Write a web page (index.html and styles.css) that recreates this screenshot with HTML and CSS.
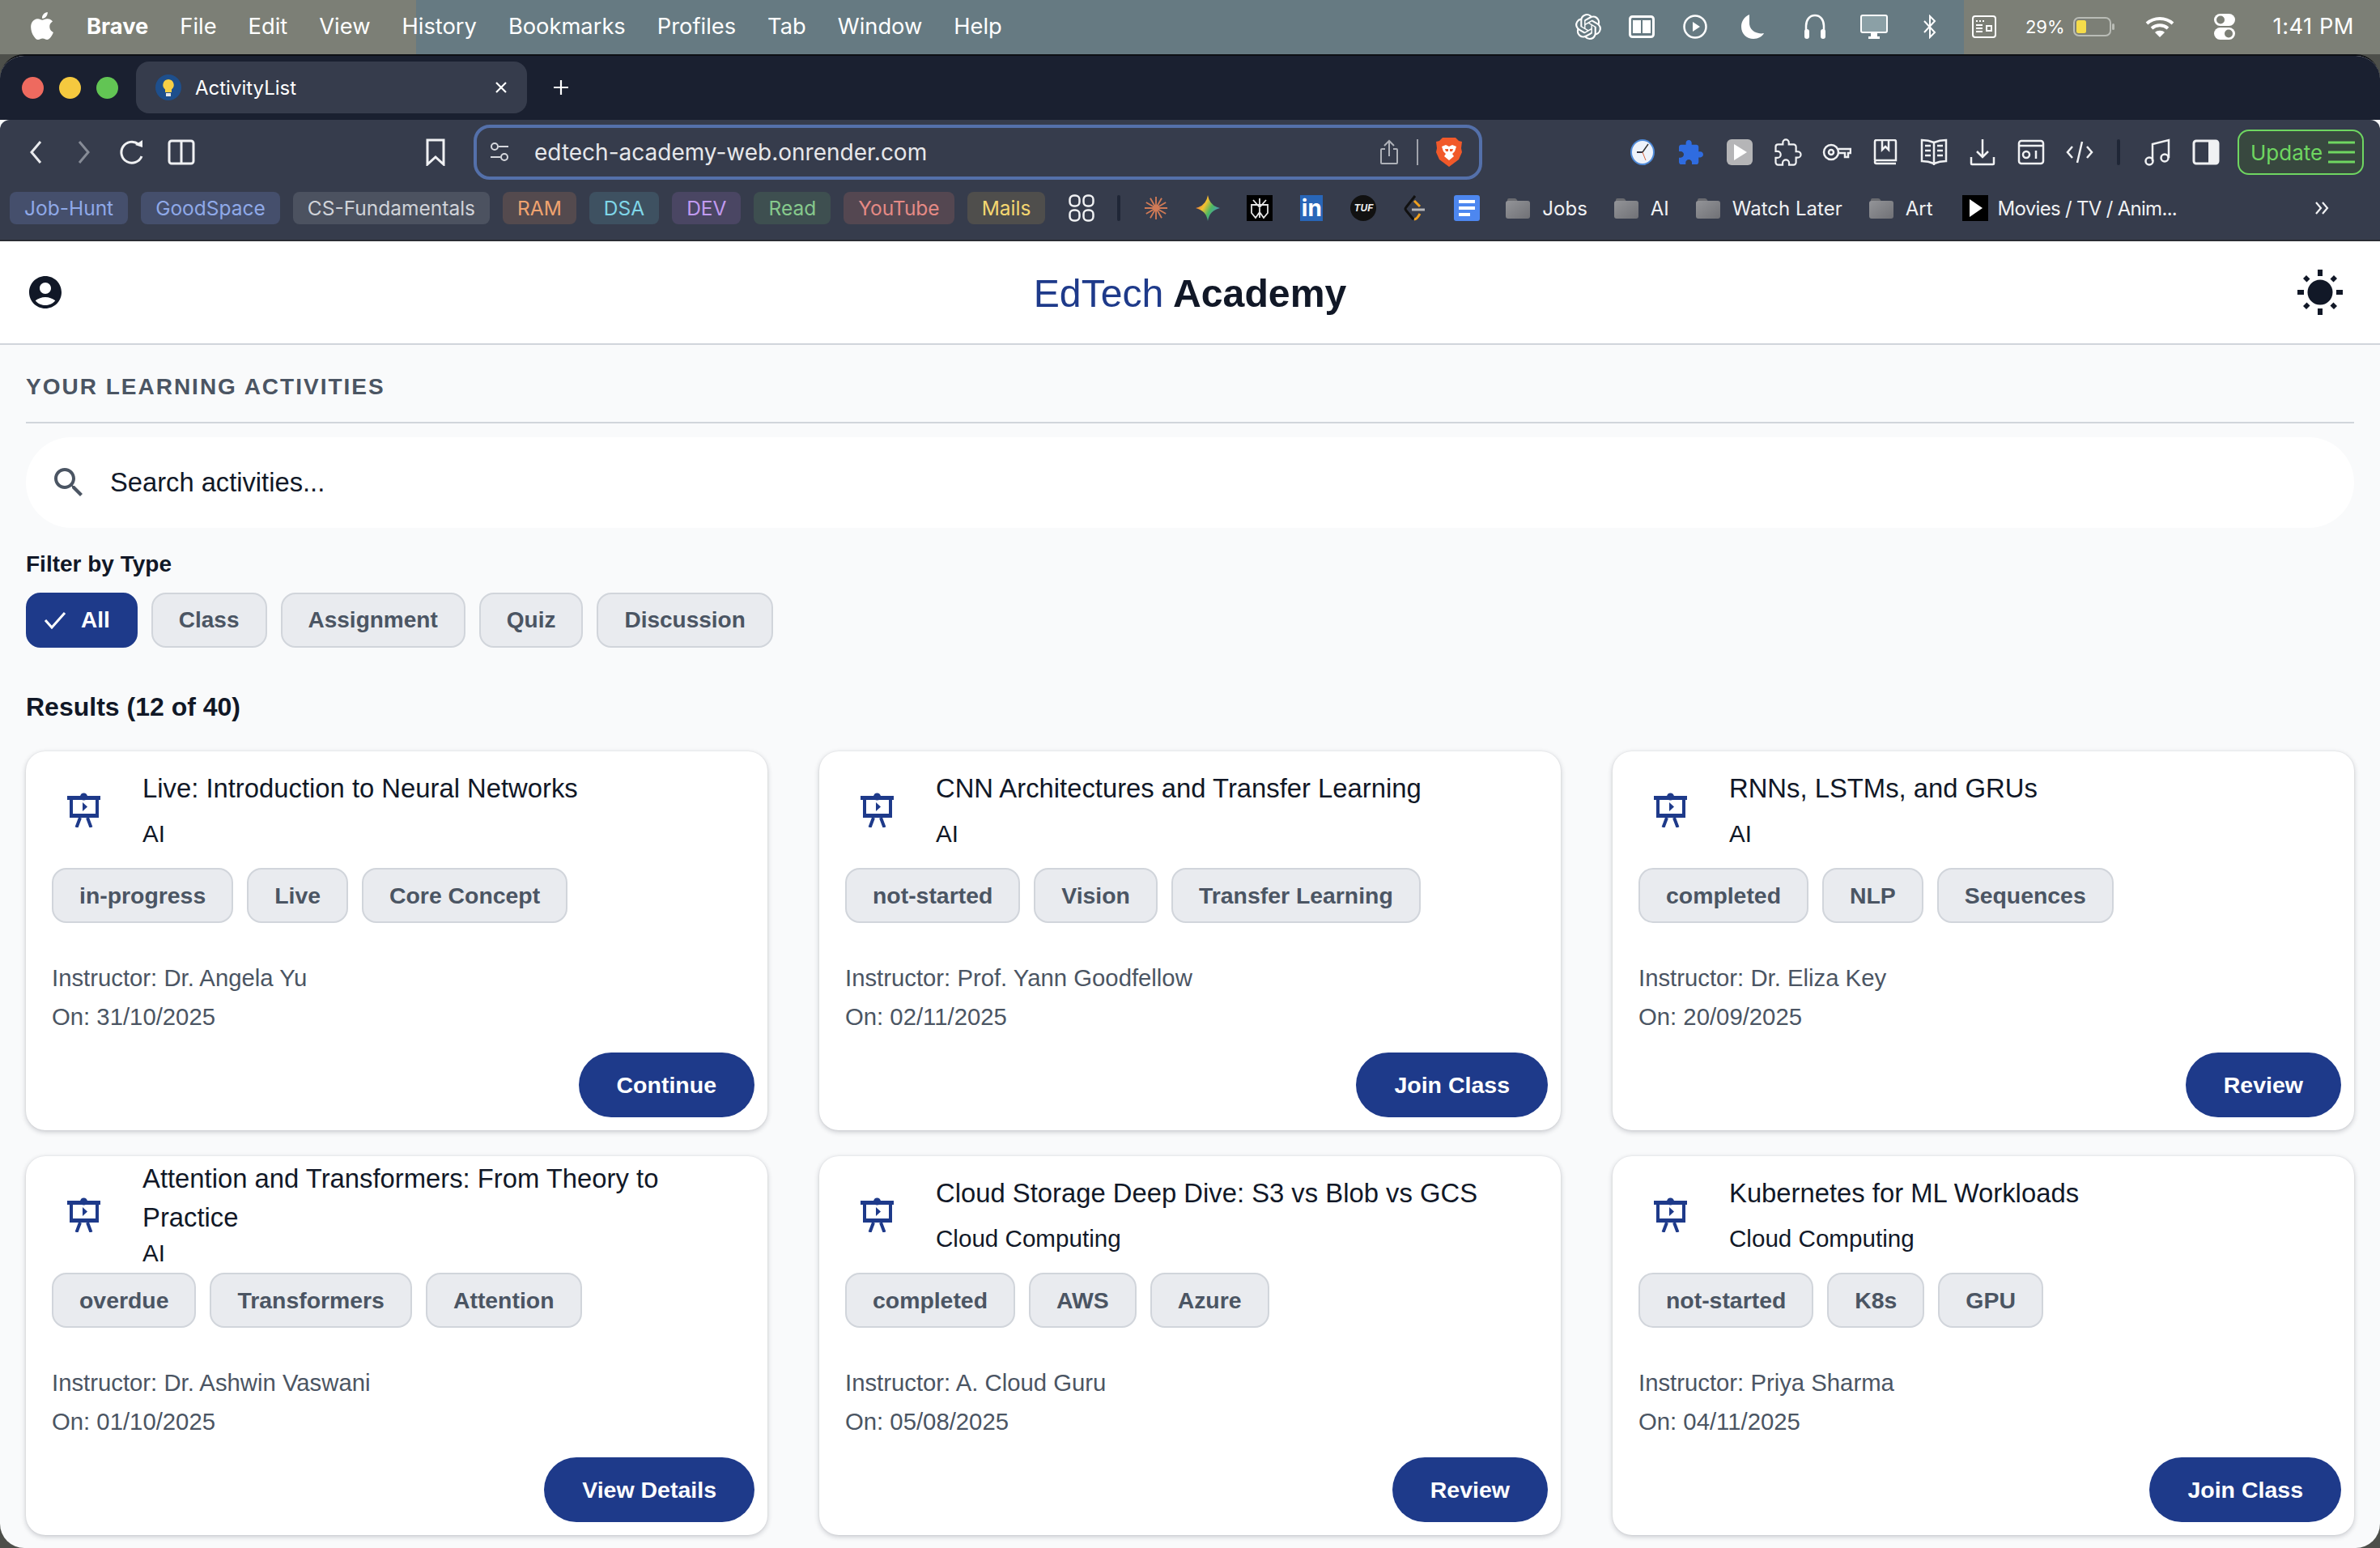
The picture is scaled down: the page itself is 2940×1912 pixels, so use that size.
FILE: index.html
```html
<!DOCTYPE html>
<html lang="en">
<head>
<meta charset="utf-8">
<title>ActivityList</title>
<link rel="stylesheet" href="styles.css">
</head>
<body>

<svg class="defs" width="0" height="0" aria-hidden="true">
	<symbol id="ico-present" viewBox="0 0 41 43">
		<circle cx="20.5" cy="5" r="4.5" fill="currentColor"/>
		<rect x="0" y="4" width="41" height="5" fill="currentColor"/>
		<path fill="currentColor" fill-rule="evenodd" d="M3 9h36v22H3zM7 9v17h28V9z"/>
		<path stroke="currentColor" stroke-width="4" fill="none" d="M16 31l-4.500 12M25 31l4.500 12"/>
		<path fill="currentColor" d="M19 12v11l6-5.500z"/>
	</symbol>
	<symbol id="ico-folder" viewBox="0 0 30 26">
		<path fill="#6a6b70" d="M2 3q0-2 2-2h7q2 0 3 2l1 2H2z"/>
		<rect x="0" y="4" width="30" height="22" rx="3" fill="url(#folder-fill)"/>
	</symbol>
	<linearGradient id="folder-fill" x1="0" y1="0" x2="1" y2="1">
		<stop offset="0" stop-color="#939498"/>
		<stop offset="1" stop-color="#707176"/>
	</linearGradient>
</svg>

<header class="menubar">
	<svg class="apple" viewBox="0 0 24 24"><path fill="#fff" d="M12.152 6.896c-.948 0-2.415-1.078-3.96-1.04-2.04.027-3.91 1.183-4.961 3.014-2.117 3.675-.546 9.103 1.519 12.09 1.013 1.454 2.208 3.09 3.792 3.039 1.52-.065 2.09-.987 3.935-.987 1.831 0 2.35.987 3.96.948 1.637-.026 2.676-1.48 3.676-2.948 1.156-1.688 1.636-3.325 1.662-3.415-.039-.013-3.182-1.221-3.22-4.857-.026-3.04 2.48-4.494 2.597-4.559-1.429-2.09-3.623-2.324-4.39-2.376-2-.156-3.675 1.09-4.61 1.09zM15.53 3.83c.843-1.012 1.4-2.427 1.245-3.83-1.207.052-2.662.805-3.532 1.818-.78.896-1.454 2.338-1.273 3.714 1.338.104 2.715-.688 3.559-1.701"/></svg>
	<nav class="menus">
		<span class="app-name">Brave</span>
		<span>File</span>
		<span>Edit</span>
		<span>View</span>
		<span>History</span>
		<span>Bookmarks</span>
		<span>Profiles</span>
		<span>Tab</span>
		<span>Window</span>
		<span>Help</span>
	</nav>
	<div class="status-icons">
		<svg width="32" height="34" viewBox="0 0 24 24"><path fill="#fff" d="M22.2819 9.8211a5.9847 5.9847 0 0 0-.5157-4.9108 6.0462 6.0462 0 0 0-6.5098-2.9A6.0651 6.0651 0 0 0 4.9807 4.1818a5.9847 5.9847 0 0 0-3.9977 2.9 6.0462 6.0462 0 0 0 .7427 7.0966 5.98 5.98 0 0 0 .511 4.9107 6.051 6.051 0 0 0 6.5146 2.9001A5.9847 5.9847 0 0 0 13.2599 24a6.0557 6.0557 0 0 0 5.7718-4.2058 5.9894 5.9894 0 0 0 3.9977-2.9001 6.0557 6.0557 0 0 0-.7475-7.0729zm-9.022 12.6081a4.4755 4.4755 0 0 1-2.8764-1.0408l.1419-.0804 4.7783-2.7582a.7948.7948 0 0 0 .3927-.6813v-6.7369l2.02 1.1686a.071.071 0 0 1 .038.052v5.5826a4.504 4.504 0 0 1-4.4945 4.4944zm-9.6607-4.1254a4.4708 4.4708 0 0 1-.5346-3.0137l.142.0852 4.783 2.7582a.7712.7712 0 0 0 .7806 0l5.8428-3.3685v2.3324a.0804.0804 0 0 1-.0332.0615L9.74 19.9502a4.4992 4.4992 0 0 1-6.1408-1.6464zM2.3408 7.8956a4.485 4.485 0 0 1 2.3655-1.9728V11.6a.7664.7664 0 0 0 .3879.6765l5.8144 3.3543-2.0201 1.1685a.0757.0757 0 0 1-.071 0l-4.8303-2.7865A4.504 4.504 0 0 1 2.3408 7.872zm16.5963 3.8558L13.1038 8.364 15.1192 7.2a.0757.0757 0 0 1 .071 0l4.8303 2.7913a4.4944 4.4944 0 0 1-.6765 8.1042v-5.6772a.79.79 0 0 0-.407-.667zm2.0107-3.0231l-.142-.0852-4.7735-2.7818a.7759.7759 0 0 0-.7854 0L9.409 9.2297V6.8974a.0662.0662 0 0 1 .0284-.0615l4.8303-2.7866a4.4992 4.4992 0 0 1 6.6802 4.66zM8.3065 12.863l-2.02-1.1638a.0804.0804 0 0 1-.038-.0567V6.0742a4.4992 4.4992 0 0 1 7.3757-3.4537l-.142.0805L8.704 5.459a.7948.7948 0 0 0-.3927.6813zm1.0976-2.3654l2.602-1.4998 2.6069 1.4998v2.9994l-2.5974 1.5-2.6067-1.5Z"/></svg>
		<svg width="32" height="28" viewBox="0 0 32 28"><rect x="1.500" y="1.500" width="29" height="25" rx="3" fill="none" stroke="#fff" stroke-width="3"/><rect x="5" y="6" width="10" height="16" fill="#fff"/><rect x="17" y="6" width="10" height="16" fill="#fff"/></svg>
		<svg width="30" height="30" viewBox="0 0 30 30"><circle cx="15" cy="15" r="13.500" fill="none" stroke="#fff" stroke-width="2.500"/><path fill="#fff" d="M12 9v12l9-6z"/></svg>
		<svg width="30" height="32" viewBox="0 0 30 32"><path fill="#fff" d="M11 1C4 4 1 10 1 16c0 9 7 15 15 15 6 0 11-3 13-7-9 2-19-4-18-14 0-4 0-7 0-9z"/></svg>
		<svg width="30" height="32" viewBox="0 0 30 32" fill="none"><path stroke="#fff" stroke-width="2.500" d="M4 22V15C4 8 8 2 15 2s11 6 11 13v7"/><rect x="2" y="19" width="6" height="12" rx="3" fill="#fff"/><rect x="22" y="19" width="6" height="12" rx="3" fill="#fff"/></svg>
		<svg width="34" height="30" viewBox="0 0 34 30"><rect x="1" y="1" width="32" height="21" rx="2" fill="#8ba0a6" stroke="#fff" stroke-width="2"/><rect x="13" y="23" width="8" height="4" fill="#fff"/><rect x="10" y="27" width="14" height="3" fill="#fff"/></svg>
		<svg width="18" height="30" viewBox="0 0 18 30" fill="none"><path stroke="#fff" stroke-width="2" d="M2 8l13 14-6 6V2l6 6L2 22"/></svg>
		<svg width="30" height="28" viewBox="0 0 30 28"><rect x="1" y="1" width="28" height="26" rx="3" fill="none" stroke="#fff" stroke-width="2"/><path stroke="#fff" stroke-width="2" d="M5 7h2M9 7h2M13 7h2M5 12h8M5 16h8M5 20h8M18 13h6v6h-6z" fill="none"/></svg>
		<span class="battery-pct">29%</span>
		<svg class="battery" width="52" height="24" viewBox="0 0 52 24"><rect x="1" y="1" width="45" height="22" rx="6" fill="none" stroke="#b9bcb6" stroke-width="2"/><rect x="4" y="4" width="12" height="16" rx="2.500" fill="#f5dc4a"/><rect x="48" y="8" width="3" height="8" rx="1.500" fill="#b9bcb6"/></svg>
		<svg class="wifi" width="36" height="28" viewBox="0 0 36 28" fill="none" stroke="#fff" stroke-width="4"><path d="M2 10c9-8 23-8 32 0M8 16c6-5 14-5 20 0"/><path fill="#fff" stroke="none" d="M18 27l-6-6c3-3 9-3 12 0z"/></svg>
		<svg class="toggles" width="26" height="32" viewBox="0 0 26 32"><rect x="0" y="0" width="26" height="15" rx="7.500" fill="#fff"/><circle cx="8" cy="7.500" r="5" fill="#7c7f76"/><rect x="0" y="17" width="26" height="15" rx="7.500" fill="#fff"/><circle cx="18" cy="24.500" r="5" fill="#7c7f76"/></svg>
		<span class="clock-text">1:41 PM</span>
	</div>
</header>

<div class="window">
	<div class="tabbar">
		<span class="light light-red"></span>
		<span class="light light-yellow"></span>
		<span class="light light-green"></span>
		<div class="tab">
			<svg class="favicon" viewBox="0 0 32 32"><circle cx="16" cy="16" r="16" fill="#1e4f8c"/><path fill="#f7cf45" d="M16 6a7 7 0 0 0-4 12.500V22h8v-3.500A7 7 0 0 0 16 6z"/><rect x="13" y="23" width="6" height="4" fill="#e8e8e8"/></svg>
			<span class="tab-title">ActivityList</span>
			<svg class="tab-close" viewBox="0 0 16 16"><path stroke="#fff" stroke-width="2.200" d="M2 2l12 12M14 2L2 14"/></svg>
		</div>
		<svg class="tab-new" viewBox="0 0 20 20"><path stroke="#fff" stroke-width="2.200" d="M10 1v18M1 10h18"/></svg>
	</div>

	<div class="chrome">
		<div class="toolbar">
			<span class="slot"><svg width="16" height="30" viewBox="0 0 16 30" fill="none" stroke="#e8e9ec" stroke-width="3"><path d="M14 2L3 15l11 13"/></svg></span>
			<span class="slot"><svg width="16" height="30" viewBox="0 0 16 30" fill="none" stroke="#868b96" stroke-width="3"><path d="M2 2l11 13L2 28"/></svg></span>
			<span class="slot"><svg width="34" height="34" viewBox="0 0 34 34" fill="none" stroke="#f0f1f3" stroke-width="3"><path d="M28 22a13 13 0 1 1-4-15"/><path fill="#f0f1f3" stroke="none" d="M20 8l9-6v9z"/></svg></span>
			<span class="slot"><svg width="34" height="32" viewBox="0 0 34 32" fill="none" stroke="#f0f1f3" stroke-width="3"><rect x="2" y="2" width="30" height="28" rx="3"/><path d="M17 2v28"/></svg></span>
			<span class="slot slot-bookmark"><svg width="26" height="34" viewBox="0 0 26 34" fill="none" stroke="#f0f1f3" stroke-width="3"><path d="M3 2h20v30l-10-9-10 9z"/></svg></span>
			<div class="urlbar">
				<svg class="url-tune" width="24" height="30" viewBox="0 0 24 30" fill="none" stroke="#d6d8dd" stroke-width="2"><circle cx="6" cy="8" r="4"/><path d="M11 8h12M1 21h12"/><circle cx="18" cy="21" r="4"/></svg>
				<span class="url-text">edtech-academy-web.onrender.com</span>
				<svg class="url-share" width="24" height="32" viewBox="0 0 24 32" fill="none" stroke="#aeb1b8" stroke-width="2"><path d="M7 12H3q-1 0-1 1v16q0 1 1 1h18q1 0 1-1V13q0-1-1-1h-4M12 21V2M6 8l6-6 6 6"/></svg>
				<span class="url-sep"></span>
				<svg class="url-brave" width="32" height="36" viewBox="0 0 32 36"><path fill="#f1592a" d="M8 0h16l4 4 4 1-1 8 1 5-4 9-12 9-12-9-4-9 1-5-1-8 4-1z"/><path fill="#fff" d="M7 11l5-2 4 2 4-2 5 2-2 6-3 3 2 3-6 5-6-5 2-3-3-3z"/><path fill="#f1592a" d="M11 14h4v3h-3zM17 14h4l-1 3h-3z"/></svg>
			</div>
			<span class="slot slot-first-ext"><svg width="30" height="32" viewBox="0 0 30 32"><ellipse cx="15" cy="16" rx="14" ry="15" fill="#eef3fb" stroke="#4f8ad8" stroke-width="2"/><path stroke="#333" stroke-width="1.500" d="M15 16l7-10"/><path stroke="#334" stroke-width="2" d="M15 16H8"/><path stroke="#d8643c" stroke-width="1" d="M15 16l4 10"/></svg></span>
			<span class="slot"><svg width="30" height="32" viewBox="2 1 21 21"><path fill="#2f6ce0" d="M20.500 11H19V7c0-1.100-.9-2-2-2h-4V3.500C13 2.120 11.880 1 10.500 1S8 2.120 8 3.500V5H4c-1.100 0-1.990.9-1.990 2v3.800H3.500c1.490 0 2.700 1.210 2.700 2.700s-1.210 2.700-2.700 2.700H2V20c0 1.100.9 2 2 2h3.800v-1.500c0-1.490 1.210-2.700 2.700-2.700 1.490 0 2.700 1.210 2.700 2.700V22H17c1.100 0 2-.9 2-2v-4h1.500c1.380 0 2.500-1.120 2.500-2.500S21.880 11 20.500 11z"/></svg></span>
			<span class="slot"><svg width="32" height="32" viewBox="0 0 32 32"><rect width="32" height="32" rx="6" fill="#b5b5b7"/><path fill="#fff" d="M9 6v20l16-10z"/></svg></span>
			<span class="slot"><svg width="34" height="34" viewBox="1 0 23 23"><path fill="none" stroke="#f0f1f3" stroke-width="1.500" d="M20.500 11H19V7c0-1.100-.9-2-2-2h-4V3.500C13 2.120 11.880 1 10.500 1S8 2.120 8 3.500V5H4c-1.100 0-1.990.9-1.990 2v3.800H3.500c1.490 0 2.700 1.210 2.700 2.700s-1.210 2.700-2.700 2.700H2V20c0 1.100.9 2 2 2h3.800v-1.500c0-1.490 1.210-2.700 2.700-2.700 1.490 0 2.700 1.210 2.700 2.700V22H17c1.100 0 2-.9 2-2v-4h1.500c1.380 0 2.500-1.120 2.500-2.500S21.880 11 20.500 11z"/></svg></span>
			<span class="slot"><svg width="36" height="22" viewBox="0 0 36 22" fill="none" stroke="#f0f1f3" stroke-width="2.500"><circle cx="11" cy="11" r="9"/><circle cx="11" cy="11" r="3"/><path d="M20 7h15v5h-3v5h-4v-5h-8"/></svg></span>
			<span class="slot"><svg width="30" height="32" viewBox="0 0 30 32" fill="none" stroke="#f0f1f3" stroke-width="2.500"><path d="M2 26V3q0-2 2-2h22q2 0 2 2v23H4q-2 0-2 2t2 2h24"/><path d="M11 2v11l4-4 4 4V2" /></svg></span>
			<span class="slot"><svg width="34" height="34" viewBox="0 0 34 34" fill="none" stroke="#f0f1f3" stroke-width="2.500"><path d="M17 5Q10 2 2 2v26q8 0 15 3 7-3 15-3V2q-8 0-15 3zM17 5v28"/><path d="M6 9h7M6 15h7M6 21h7M21 9h7M21 15h7M21 21h7"/></svg></span>
			<span class="slot"><svg width="32" height="34" viewBox="0 0 32 34" fill="none" stroke="#f0f1f3" stroke-width="2.500"><path d="M16 1v22M9 16l7 7 7-7M2 23v8q0 1 1 1h26q1 0 1-1v-8"/></svg></span>
			<span class="slot"><svg width="34" height="32" viewBox="0 0 34 32" fill="none" stroke="#f0f1f3" stroke-width="2.500"><rect x="2" y="2" width="30" height="28" rx="3"/><path d="M2 8h30"/><circle cx="11" cy="19" r="4"/><path d="M23 14v10"/></svg></span>
			<span class="slot"><svg width="34" height="30" viewBox="0 0 34 30" fill="none" stroke="#f0f1f3" stroke-width="2.500"><path d="M8 8l-6 7 6 7M26 8l6 7-6 7M20 2l-6 26"/></svg></span>
			<span class="toolbar-sep"></span>
			<span class="slot"><svg width="34" height="34" viewBox="0 0 34 34" fill="none" stroke="#f0f1f3" stroke-width="2.500"><circle cx="7" cy="28" r="4.500"/><circle cx="26" cy="24" r="4.500"/><path d="M11 28V7L31 2v22"/></svg></span>
			<span class="slot"><svg width="34" height="32" viewBox="0 0 34 32"><rect x="2" y="2" width="30" height="28" rx="3" fill="none" stroke="#f0f1f3" stroke-width="3"/><rect x="20" y="2" width="12" height="28" fill="#f0f1f3"/></svg></span>
			<div class="update">
				<span>Update</span>
				<svg width="33" height="28" viewBox="0 0 33 28"><path stroke="#6fd661" stroke-width="3" d="M0 2h33M0 14h33M0 26h33"/></svg>
			</div>
		</div>

		<div class="bookmarks">
			<span class="mark mark-blue">Job-Hunt</span>
			<span class="mark mark-blue">GoodSpace</span>
			<span class="mark mark-grey">CS-Fundamentals</span>
			<span class="mark mark-orange">RAM</span>
			<span class="mark mark-cyan">DSA</span>
			<span class="mark mark-purple">DEV</span>
			<span class="mark mark-green">Read</span>
			<span class="mark mark-red">YouTube</span>
			<span class="mark mark-yellow">Mails</span>
			<span class="bm-icon bm-grid"><svg width="32" height="34" viewBox="0 0 32 34" fill="none" stroke="#f0f1f3" stroke-width="2.500"><rect x="1.500" y="1.500" width="12" height="13" rx="5"/><rect x="18.500" y="1.500" width="12" height="13" rx="5"/><rect x="1.500" y="19.500" width="12" height="13" rx="5"/><rect x="18.500" y="19.500" width="12" height="13" rx="5"/></svg></span>
			<span class="bm-sep"></span>
			<span class="bm-icon"><svg width="30" height="32" viewBox="0 0 32 32" stroke="#cf7a56" stroke-width="2"><path d="M16 1v30M1 16h30M8.500 3l15 26M23.500 3l-15 26M3 8.500l26 15M29 8.500l-26 15"/></svg></span>
			<span class="bm-icon"><svg width="30" height="32" viewBox="0 0 30 32"><defs><linearGradient id="gem" x1="0" y1=".2" x2="1" y2=".8"><stop offset="0" stop-color="#e8553f"/><stop offset=".35" stop-color="#f2c230"/><stop offset=".6" stop-color="#4cb863"/><stop offset="1" stop-color="#4a86e8"/></linearGradient></defs><path fill="url(#gem)" d="M15 0q2 13 15 16-13 3-15 16-2-13-15-16 13-3 15-16z"/></svg></span>
			<span class="bm-icon"><svg width="32" height="32" viewBox="0 0 32 32"><rect width="32" height="32" fill="#000"/><path fill="none" stroke="#e6e6e6" stroke-width="1.800" d="M16 4v24M8 6l8 9 8-9M6 12h20v10l-5 6-5-7-5 7-5-6z"/></svg></span>
			<span class="bm-icon"><span class="logo-in">in</span></span>
			<span class="bm-icon"><span class="logo-tuf">TUF</span></span>
			<span class="bm-icon"><svg width="28" height="32" viewBox="0 0 28 32" fill="none" stroke-width="3"><path stroke="#111" d="M14 1L3 15q-2 2 0 4l9 11"/><path stroke="#f0a01e" d="M13 7l7 7M13 30q3 0 7-7"/><path stroke="#b5b5b7" d="M10 18h16"/></svg></span>
			<span class="bm-icon"><svg width="32" height="32" viewBox="0 0 32 32"><rect width="32" height="32" rx="3" fill="#4d87f0"/><path fill="#fff" d="M6 6h20v4H6zM6 14h20v4H6zM6 22h14v4H6z"/></svg></span>
			<span class="bm-folder bm-folder-first"><svg class="folder-ico"><use href="#ico-folder"/></svg>Jobs</span>
			<span class="bm-folder"><svg class="folder-ico"><use href="#ico-folder"/></svg>AI</span>
			<span class="bm-folder"><svg class="folder-ico"><use href="#ico-folder"/></svg>Watch Later</span>
			<span class="bm-folder"><svg class="folder-ico"><use href="#ico-folder"/></svg>Art</span>
			<span class="bm-folder bm-movies"><svg width="32" height="32" viewBox="0 0 32 32"><rect width="32" height="32" fill="#000"/><path fill="#fff" d="M9 5v22l16-11z"/></svg>Movies / TV / Anim...</span>
			<svg class="bm-more" width="20" height="20" viewBox="0 0 20 20" fill="none" stroke="#f0f1f3" stroke-width="2.200"><path d="M3 3l6 7-6 7M11 3l6 7-6 7"/></svg>
		</div>
	</div>

	<main class="page">
		<div class="topbar">
			<svg class="profile" viewBox="0 0 24 24"><path fill="currentColor" d="M12 2C6.480 2 2 6.480 2 12s4.480 10 10 10 10-4.480 10-10S17.520 2 12 2zm0 4c1.930 0 3.500 1.570 3.500 3.500S13.930 13 12 13s-3.500-1.570-3.500-3.500S10.070 6 12 6zm0 14c-2.030 0-4.430-.82-6.140-2.880C7.550 15.800 9.680 15 12 15s4.450.8 6.140 2.120C16.430 19.180 14.030 20 12 20z"/></svg>
			<h1 class="brand"><span class="brand-a">EdTech</span> Academy</h1>
			<svg class="sun" viewBox="0 0 56 56"><circle cx="28" cy="28" r="15.500" fill="currentColor"/><path fill="currentColor" d="M25 0h6v8h-6zM25 48h6v8h-6zM0 25h8v6H0zM48 25h8v6h-8z"/><path fill="currentColor" d="M11 7l4.500 4.500-4 4L7 11zM45 7l4 4-4.500 4.500-4-4zM11 49l-4-4 4.500-4.500 4 4zM45 49l-4.500-4.500 4-4L49 45z"/></svg>
		</div>

		<div class="content">
			<h2 class="section-title">YOUR LEARNING ACTIVITIES</h2>

			<div class="search">
				<svg class="search-ico" viewBox="0 0 24 24"><path fill="currentColor" d="M15.500 14h-.79l-.28-.27C15.410 12.590 16 11.110 16 9.500 16 5.910 13.090 3 9.500 3S3 5.910 3 9.500 5.910 16 9.500 16c1.610 0 3.090-.59 4.230-1.570l.27.28v.79l5 4.990L20.490 19l-4.990-5zm-6 0C7.010 14 5 11.990 5 9.500S7.010 5 9.500 5 14 7.010 14 9.500 11.990 14 9.500 14z"/></svg>
				<span>Search activities...</span>
			</div>

			<div class="filter-label">Filter by Type</div>
			<div class="chips filter-chips">
				<span class="chip chip-on"><svg width="28" height="22" viewBox="0 0 28 22" fill="none" stroke="#fff" stroke-width="3"><path d="M2 11l8 9L26 2"/></svg>All</span>
				<span class="chip">Class</span>
				<span class="chip">Assignment</span>
				<span class="chip">Quiz</span>
				<span class="chip">Discussion</span>
			</div>

			<div class="results">Results (12 of 40)</div>

			<div class="cards">
				<article class="card">
					<div class="card-head">
						<svg class="card-ico"><use href="#ico-present"/></svg>
						<div class="card-text">
							<div class="card-title">Live: Introduction to Neural Networks</div>
							<div class="card-sub">AI</div>
						</div>
					</div>
					<div class="chips">
						<span class="chip">in-progress</span>
						<span class="chip">Live</span>
						<span class="chip">Core Concept</span>
					</div>
					<div class="card-meta">Instructor: Dr. Angela Yu</div>
					<div class="card-meta">On: 31/10/2025</div>
					<button class="card-btn">Continue</button>
				</article>

				<article class="card">
					<div class="card-head">
						<svg class="card-ico"><use href="#ico-present"/></svg>
						<div class="card-text">
							<div class="card-title">CNN Architectures and Transfer Learning</div>
							<div class="card-sub">AI</div>
						</div>
					</div>
					<div class="chips">
						<span class="chip">not-started</span>
						<span class="chip">Vision</span>
						<span class="chip">Transfer Learning</span>
					</div>
					<div class="card-meta">Instructor: Prof. Yann Goodfellow</div>
					<div class="card-meta">On: 02/11/2025</div>
					<button class="card-btn">Join Class</button>
				</article>

				<article class="card">
					<div class="card-head">
						<svg class="card-ico"><use href="#ico-present"/></svg>
						<div class="card-text">
							<div class="card-title">RNNs, LSTMs, and GRUs</div>
							<div class="card-sub">AI</div>
						</div>
					</div>
					<div class="chips">
						<span class="chip">completed</span>
						<span class="chip">NLP</span>
						<span class="chip">Sequences</span>
					</div>
					<div class="card-meta">Instructor: Dr. Eliza Key</div>
					<div class="card-meta">On: 20/09/2025</div>
					<button class="card-btn">Review</button>
				</article>

				<article class="card">
					<div class="card-head">
						<svg class="card-ico"><use href="#ico-present"/></svg>
						<div class="card-text card-text-long">
							<div class="card-title">Attention and Transformers: From Theory to Practice</div>
							<div class="card-sub">AI</div>
						</div>
					</div>
					<div class="chips">
						<span class="chip">overdue</span>
						<span class="chip">Transformers</span>
						<span class="chip">Attention</span>
					</div>
					<div class="card-meta">Instructor: Dr. Ashwin Vaswani</div>
					<div class="card-meta">On: 01/10/2025</div>
					<button class="card-btn">View Details</button>
				</article>

				<article class="card">
					<div class="card-head">
						<svg class="card-ico"><use href="#ico-present"/></svg>
						<div class="card-text">
							<div class="card-title">Cloud Storage Deep Dive: S3 vs Blob vs GCS</div>
							<div class="card-sub">Cloud Computing</div>
						</div>
					</div>
					<div class="chips">
						<span class="chip">completed</span>
						<span class="chip">AWS</span>
						<span class="chip">Azure</span>
					</div>
					<div class="card-meta">Instructor: A. Cloud Guru</div>
					<div class="card-meta">On: 05/08/2025</div>
					<button class="card-btn">Review</button>
				</article>

				<article class="card">
					<div class="card-head">
						<svg class="card-ico"><use href="#ico-present"/></svg>
						<div class="card-text">
							<div class="card-title">Kubernetes for ML Workloads</div>
							<div class="card-sub">Cloud Computing</div>
						</div>
					</div>
					<div class="chips">
						<span class="chip">not-started</span>
						<span class="chip">K8s</span>
						<span class="chip">GPU</span>
					</div>
					<div class="card-meta">Instructor: Priya Sharma</div>
					<div class="card-meta">On: 04/11/2025</div>
					<button class="card-btn">Join Class</button>
				</article>
			</div>
		</div>
	</main>
</div>

</body>
</html>
```

FILE: styles.css
```css
:root {
	--navy        : #1e3a8a;
	--ink         : #111827;
	--slate       : #4b5563;
	--line        : #d1d5db;
	--chip-bg     : #e9ebef;
	--page-bg     : #f9fafb;
	--chrome-bg   : #363c4c;
	--tabbar-bg   : #1a2030;
	--ui-font     : Inter, "Liberation Sans", sans-serif;
	--page-font   : "Liberation Sans", Arial, sans-serif;
}
* {
	box-sizing : border-box;
}
html, body {
	margin : 0;
	width  : 2940px;
	height : 1912px;
}
body {
	overflow    : hidden;
	background  : #4d4f4a;
	font-family : var(--ui-font);
	color       : var(--ink);
}
svg {
	display     : block;
	flex-shrink : 0;
}
.defs {
	position : absolute;
}

/* mac menu bar */
.menubar {
	height      : 67px;
	display     : flex;
	align-items : center;
	color       : #fff;
	font-size   : 27.300px;
	background  : linear-gradient(90deg, #7c7f76 0, #7c7f76 514px, #667a82 514px, #667a82 2426px, #7c7f76 2426px);
}
.apple {
	width       : 34px;
	height      : 34px;
	margin-left : 35px;
	margin-top  : -4px;
}
.menus {
	display     : flex;
	gap         : 39px;
	margin-left : 38px;
	margin-top  : -2px;
}
.app-name {
	font-weight : 700;
}
.status-icons {
	margin-left : auto;
	display     : flex;
	align-items : center;
	margin-top  : -2px;
}
.status-icons > svg:nth-child(1) { margin-right : 34px; }
.status-icons > svg:nth-child(2) { margin-right : 35px; }
.status-icons > svg:nth-child(3) { margin-right : 41px; }
.status-icons > svg:nth-child(4) { margin-right : 47px; }
.status-icons > svg:nth-child(5) { margin-right : 41px; }
.status-icons > svg:nth-child(6) { margin-right : 43px; }
.status-icons > svg:nth-child(7) { margin-right : 43px; }
.status-icons > svg:nth-child(8) { margin-right : 36px; }
.battery-pct {
	font-size : 22px;
}
.battery {
	margin-left : 10px;
}
.wifi {
	margin-left : 37px;
}
.toggles {
	margin-left : 49px;
}
.clock-text {
	margin-left    : 47px;
	margin-right   : 32px;
	letter-spacing : .5px;
}

/* browser window */
.window {
	height        : 1845px;
	border-top    : 2px solid #0d0f14;
	border-radius : 30px;
	overflow      : hidden;
	display       : flex;
	flex-direction: column;
	background    : var(--page-bg);
}
.tabbar {
	height      : 79px;
	flex-shrink : 0;
	display     : flex;
	align-items : flex-start;
	padding-top : 7px;
	background  : var(--tabbar-bg);
	color       : #fff;
}
.light {
	width         : 27px;
	height        : 27px;
	border-radius : 50%;
	margin-top    : 19px;
	margin-right  : 19px;
}
.light-red    { background : #ee6a5f; margin-left : 27px; }
.light-yellow { background : #f5c93f; }
.light-green  { background : #62c554; margin-right : 22px; }
.tab {
	width         : 483px;
	height        : 64px;
	border-radius : 16px;
	background    : var(--chrome-bg);
	display       : flex;
	align-items   : center;
	padding       : 0 24px;
}
.favicon {
	width  : 32px;
	height : 32px;
}
.tab-title {
	margin-left : 17px;
	font-size   : 24px;
}
.tab-close {
	margin-left : auto;
	width       : 16px;
	height      : 16px;
}
.tab-new {
	width       : 20px;
	height      : 20px;
	margin-left : 32px;
	margin-top  : 22px;
}
.chrome {
	height        : 150px;
	flex-shrink   : 0;
	background    : var(--chrome-bg);
	border-radius : 12px 12px 0 0;
	border-bottom : 2px solid #2a2c33;
}
.toolbar {
	height      : 80px;
	display     : flex;
	align-items : center;
	padding-left: 14px;
}
.slot {
	width           : 60px;
	height          : 60px;
	display         : flex;
	align-items     : center;
	justify-content : center;
	flex-shrink     : 0;
}
.slot-bookmark {
	margin-left : 254px;
}
.urlbar {
	width         : 1246px;
	height        : 68px;
	margin-left   : 17px;
	border        : 4px solid #5470aa;
	border-radius : 20px;
	display       : flex;
	align-items   : center;
	padding-left  : 16px;
	margin-top    : -1px;
}
.url-text {
	margin-left : 31px;
	font-size   : 28px;
	color       : #e6e7ea;
}
.url-share {
	margin-left : auto;
}
.url-sep {
	width       : 2px;
	height      : 32px;
	background  : #a0a3ab;
	margin      : 0 22px;
}
.url-brave {
	margin-right : 21px;
}
.slot-first-ext {
	margin-left : 168px;
}
.toolbar-sep, .bm-sep {
	width         : 4px;
	height        : 32px;
	border-radius : 2px;
	background    : #1f2636;
	flex-shrink   : 0;
}
.toolbar-sep {
	margin : 0 16px;
}
.update {
	width           : 156px;
	height          : 56px;
	margin-left     : 9px;
	border          : 2px solid #6fd661;
	border-radius   : 14px;
	background      : #38483f;
	color           : #6fd661;
	font-size       : 26px;
	display         : flex;
	align-items     : center;
	justify-content : space-between;
	padding         : 0 9px 0 14px;
}

/* bookmarks bar */
.bookmarks {
	height      : 68px;
	display     : flex;
	align-items : center;
	padding     : 0 0 10px 12px;
	font-size   : 24px;
	color       : #f0f1f3;
}
.mark {
	height        : 40px;
	line-height   : 40px;
	padding       : 0 18px;
	border-radius : 8px;
	margin-right  : 16px;
	white-space   : nowrap;
	font-size     : 24.500px;
}
.mark-blue   { background : #454f6c; color : #8fa9e8; }
.mark-grey   { background : #4c5260; color : #d0d3d9; }
.mark-orange { background : #544a4e; color : #f0a36f; }
.mark-cyan   { background : #3e5161; color : #7fd6e8; }
.mark-purple { background : #4a4663; color : #c19af0; }
.mark-green  { background : #3e4f50; color : #86c98c; }
.mark-red    { background : #544751; color : #e58a85; }
.mark-yellow { background : #4f4e4c; color : #f5d770; }
.bm-icon {
	width           : 64px;
	height          : 40px;
	display         : flex;
	align-items     : center;
	justify-content : center;
	flex-shrink     : 0;
}
.bm-grid {
	margin-left : -3px;
}
.bm-sep {
	margin : 0 12px;
}
.logo-in {
	width       : 28px;
	height      : 32px;
	background  : #2866b8;
	color       : #fff;
	font-weight : 700;
	font-size   : 28px;
	line-height : 32px;
	text-align  : center;
}
.logo-tuf {
	width         : 32px;
	height        : 32px;
	border-radius : 50%;
	background    : #111;
	color         : #eee;
	font-size     : 12px;
	font-weight   : 700;
	font-style    : italic;
	line-height   : 32px;
	text-align    : center;
}
.bm-folder {
	display     : flex;
	align-items : center;
	white-space : nowrap;
	margin-right: 33px;
}
.bm-folder-first {
	margin-left : 16px;
}
.folder-ico {
	width        : 30px;
	height       : 26px;
	margin-right : 15px;
}
.bm-movies {
	margin-left    : 3px;
	margin-right   : 0;
	letter-spacing : -.7px;
}
.bm-movies svg {
	margin-right : 12px;
}
.bm-more {
	margin-left : 169px;
}

/* page */
.page {
	flex        : 1;
	min-height  : 0;
	font-family : var(--page-font);
}
.topbar {
	height         : 128px;
	display        : grid;
	grid-template-columns : 1fr auto 1fr;
	align-items    : center;
	padding        : 0 46px;
	background     : #fff;
	border-bottom  : 2px solid var(--line);
}
.profile {
	width       : 48px;
	height      : 48px;
	margin-left : -14px;
	color       : var(--ink);
}
.brand {
	margin      : 0;
	padding-top : 2px;
	font-size   : 48.200px;
	font-weight : 700;
	color       : var(--ink);
}
.brand-a {
	font-weight : 400;
	color       : var(--navy);
}
.sun {
	width        : 56px;
	height       : 56px;
	justify-self : end;
	color        : var(--ink);
}
.content {
	padding : 32px 32px 0;
}
.section-title {
	margin         : 0;
	height         : 65px;
	line-height    : 40px;
	border-bottom  : 2px solid var(--line);
	font-size      : 28px;
	font-weight    : 700;
	letter-spacing : 2px;
	color          : var(--slate);
}
.search {
	height        : 112px;
	margin-top    : 17px;
	border-radius : 56px;
	background    : #fff;
	display       : flex;
	align-items   : center;
	padding-left  : 29px;
	gap           : 27px;
	font-size     : 32.700px;
}
.search-ico {
	width  : 48px;
	height : 48px;
	color  : var(--slate);
}
.filter-label {
	margin-top  : 27px;
	line-height : 36px;
	font-size   : 28px;
	font-weight : 700;
}
.chips {
	display : flex;
	gap     : 17px;
}
.filter-chips {
	margin-top : 17px;
}
.chip {
	height        : 68px;
	padding       : 0 32px;
	display       : flex;
	align-items   : center;
	border        : 2px solid var(--line);
	border-radius : 18px;
	background    : var(--chip-bg);
	color         : var(--slate);
	font-size     : 28.400px;
	font-weight   : 700;
	white-space   : nowrap;
}
.filter-chips .chip {
	font-size : 28px;
}
.chip-on {
	padding      : 0 32px 0 20px;
	gap          : 18px;
	background   : var(--navy);
	border-color : var(--navy);
	color        : #fff;
}
.results {
	margin-top  : 51px;
	line-height : 44px;
	font-size   : 32px;
	font-weight : 700;
}
.cards {
	margin-top : 33px;
	display    : grid;
	grid-template-columns : repeat(3, 916px);
	column-gap : 64px;
	row-gap    : 32px;
}
.card {
	height        : 468px;
	padding       : 4px 16px 16px 32px;
	display       : flex;
	flex-direction: column;
	background    : #fff;
	border-radius : 24px;
	box-shadow    : 0 2px 6px rgba(17, 24, 39, .22), 0 0 2px rgba(17, 24, 39, .08);
}
.card-head {
	height      : 136px;
	flex-shrink : 0;
	display     : flex;
	align-items : center;
	margin-bottom : 4px;
}
.card-ico {
	width        : 41px;
	height       : 43px;
	margin-left  : 19px;
	margin-right : 52px;
	color        : var(--navy);
}
.card-text {
	height          : 136px;
	display         : flex;
	flex-direction  : column;
	justify-content : space-evenly;
	flex            : 1;
	padding         : 6px 40px 6px 0;
}
.card-text-long {
	padding-top    : 0;
	padding-bottom : 0;
}
.card-title {
	font-size   : 32.800px;
	line-height : 48px;
}
.card-sub {
	font-size   : 29.600px;
	line-height : 40px;
}
.card-meta {
	font-size   : 29.300px;
	line-height : 48px;
	color       : var(--slate);
}
.chips + .card-meta {
	margin-top : 44px;
}
.card-btn {
	margin-top    : auto;
	align-self    : flex-end;
	height        : 80px;
	padding       : 0 47px;
	border        : 0;
	border-radius : 40px;
	background    : var(--navy);
	color         : #fff;
	font-family   : var(--page-font);
	font-size     : 28.500px;
	font-weight   : 700;
}
```
